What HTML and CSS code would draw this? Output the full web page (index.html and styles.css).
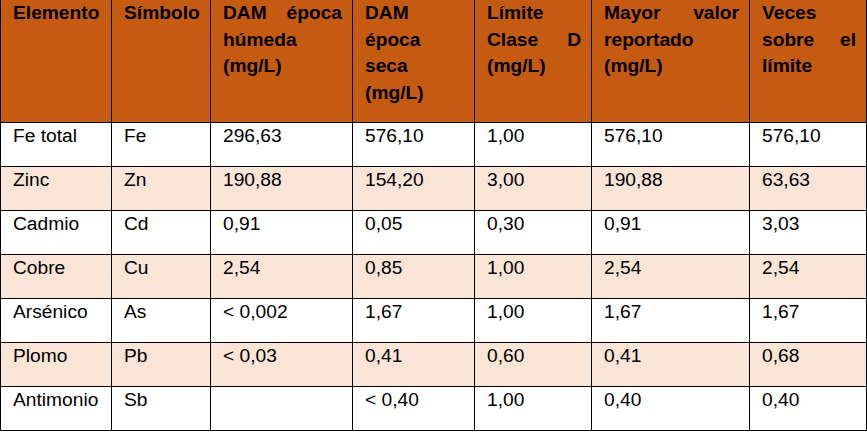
FILE: index.html
```html
<!DOCTYPE html>
<html lang="es">
<head>
<meta charset="utf-8">
<title>Tabla</title>
<link rel="stylesheet" href="styles.css">
</head>
<body>
<table class="data">
  <colgroup>
    <col class="c1"><col class="c2"><col class="c3"><col class="c4"><col class="c5"><col class="c6"><col class="c7">
  </colgroup>
  <thead>
    <tr class="head">
      <th>Elemento</th>
      <th>Símbolo</th>
      <th>DAM época húmeda (mg/L)</th>
      <th>DAM época seca (mg/L)</th>
      <th>Límite Clase D (mg/L)</th>
      <th>Mayor valor reportado (mg/L)</th>
      <th>Veces sobre el límite</th>
    </tr>
  </thead>
  <tbody>
    <tr><td>Fe total</td><td>Fe</td><td>296,63</td><td>576,10</td><td>1,00</td><td>576,10</td><td>576,10</td></tr>
    <tr class="alt"><td>Zinc</td><td>Zn</td><td>190,88</td><td>154,20</td><td>3,00</td><td>190,88</td><td>63,63</td></tr>
    <tr><td>Cadmio</td><td>Cd</td><td>0,91</td><td>0,05</td><td>0,30</td><td>0,91</td><td>3,03</td></tr>
    <tr class="alt"><td>Cobre</td><td>Cu</td><td>2,54</td><td>0,85</td><td>1,00</td><td>2,54</td><td>2,54</td></tr>
    <tr><td>Arsénico</td><td>As</td><td>&lt; 0,002</td><td>1,67</td><td>1,00</td><td>1,67</td><td>1,67</td></tr>
    <tr class="alt"><td>Plomo</td><td>Pb</td><td>&lt; 0,03</td><td>0,41</td><td>0,60</td><td>0,41</td><td>0,68</td></tr>
    <tr><td>Antimonio</td><td>Sb</td><td></td><td>&lt; 0,40</td><td>1,00</td><td>0,40</td><td>0,40</td></tr>
  </tbody>
</table>
</body>
</html>
```

FILE: styles.css
```css
html, body {
  margin: 0;
  padding: 0;
  background: #ffffff;
}

.data {
  border-collapse: collapse;
  table-layout: fixed;
  width: 866px;
  font-family: "Liberation Sans", Arial, sans-serif;
  font-size: 19.2px;
  line-height: 26.7px;
  color: #000000;
}

.c1 { width: 111px; }
.c2 { width: 99px; }
.c3 { width: 142px; }
.c4 { width: 122px; }
.c5 { width: 117px; }
.c6 { width: 158px; }
.c7 { width: 117px; }

.data th,
.data td {
  border: 1px solid #000000;
  padding: 0 10px 0 12px;
  vertical-align: top;
  text-align: left;
  overflow: hidden;
}

.data th {
  border-top: 0;
  font-weight: bold;
  text-align: justify;
  text-align-last: left;
  background: #c55a11;
}

.head {
  height: 122px;
}

.data tbody tr {
  height: 44px;
}

.data tbody tr.alt td {
  background: #f9e4d6;
}
```
